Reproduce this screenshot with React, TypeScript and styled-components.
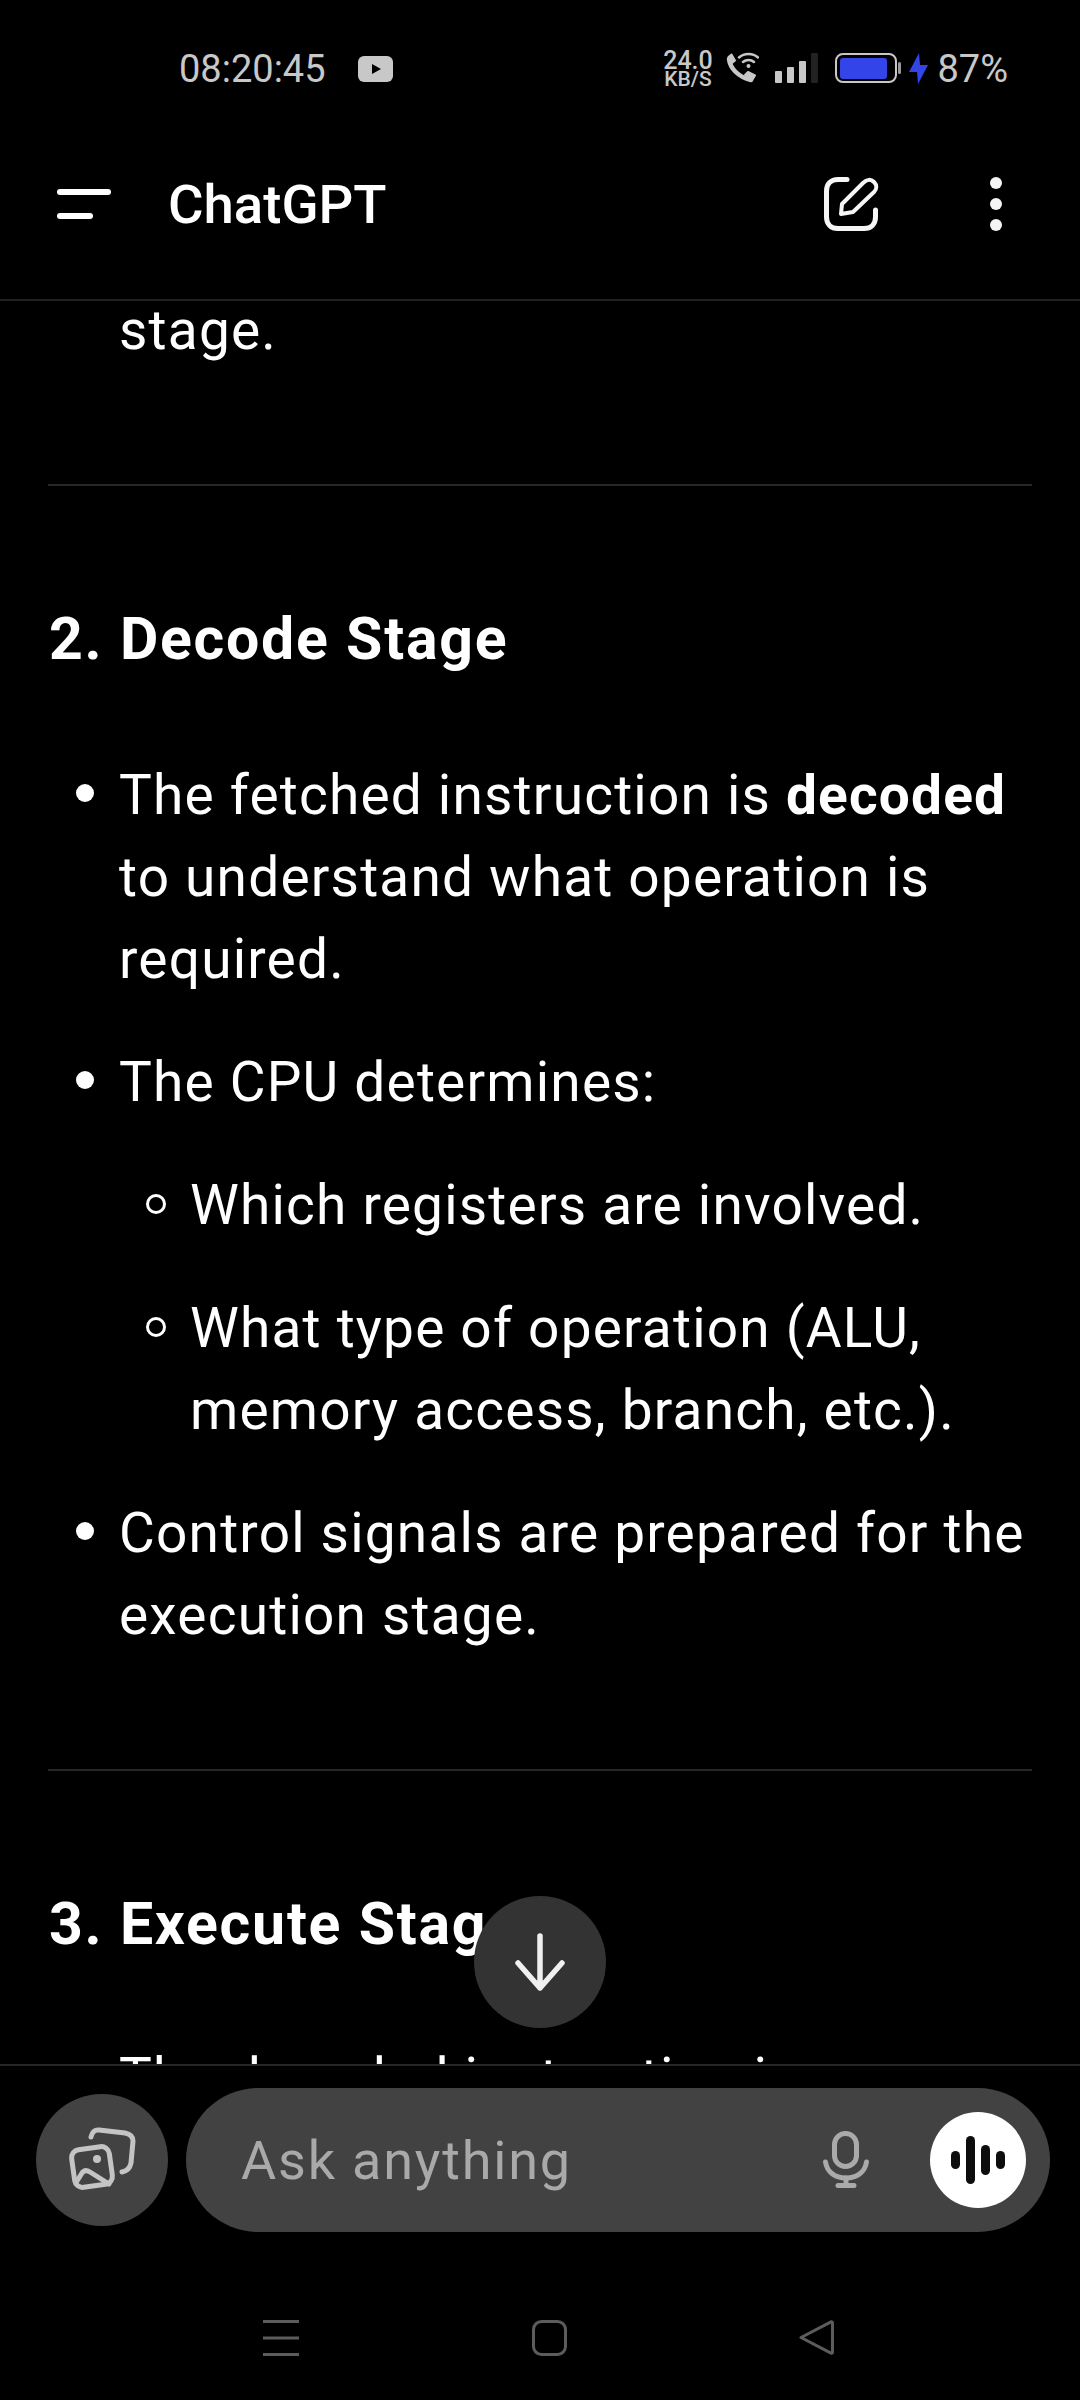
import React from 'react';
import styled, { createGlobalStyle } from 'styled-components';

const GlobalStyle = createGlobalStyle`
  html, body {
    margin: 0;
    padding: 0;
    background: #000;
  }
  * {
    box-sizing: border-box;
  }
`;

const Page = styled.div`
  position: relative;
  width: 1080px;
  height: 2400px;
  background: #000;
  color: #fff;
  font-family: Roboto, "Liberation Sans", sans-serif;
  display: flex;
  flex-direction: column;
  overflow: hidden;
`;

const StatusBar = styled.div`
  height: 135px;
  flex: none;
  display: flex;
  align-items: flex-start;
  padding: 47px 72px 0 179px;
  color: #c8c8c8;
`;

const Clock = styled.div`
  font-size: 38px;
  line-height: 44px;
  width: 146px;
`;

const StatusRight = styled.div`
  margin-left: auto;
  display: flex;
  align-items: flex-start;
  height: 44px;
`;

const Slot = styled.div<{ $left?: number; $top?: number }>`
  margin-left: ${(p) => p.$left ?? 0}px;
  margin-top: ${(p) => p.$top ?? 0}px;
  display: flex;
  flex: none;
`;

const NetSpeed = styled.div`
  width: 49px;
  margin-top: 4px;
  display: flex;
  flex-direction: column;
  align-items: center;
  font-weight: 500;
  color: #c8c8c8;
  span:first-child {
    font-size: 25px;
    line-height: 20px;
  }
  span:last-child {
    font-size: 21px;
    line-height: 15px;
    margin-top: 1px;
  }
`;

const Percent = styled.div`
  margin-left: 9px;
  font-size: 38px;
  line-height: 44px;
`;

const Header = styled.header`
  height: 166px;
  flex: none;
  display: flex;
  align-items: center;
  padding: 0 0 27px 57px;
  border-bottom: 2px solid #1f1f1f;
`;

const MenuLines = styled.div`
  width: 54px;
  display: flex;
  flex-direction: column;
  gap: 18px;
`;

const MenuLine = styled.div<{ $width: number }>`
  width: ${(p) => p.$width}px;
  height: 6px;
  border-radius: 3px;
  background: #fff;
`;

const Title = styled.h1`
  margin: 0 0 0 57px;
  font-size: 54.5px;
  line-height: 60px;
  font-weight: 500;
  color: #fff;
`;

const HeaderActions = styled.div`
  margin-left: auto;
  display: flex;
  align-items: center;
  padding-right: 78px;
`;

const Dots = styled.div`
  margin-left: 111px;
  display: flex;
  flex-direction: column;
  gap: 9px;
  span {
    width: 12px;
    height: 12px;
    border-radius: 50%;
    background: #f4f4f4;
  }
`;

const Content = styled.main`
  flex: 1;
  min-height: 0;
  overflow: hidden;
`;

const Scroller = styled.div`
  margin-top: -12px;
  padding: 0 48px;
  font-size: 55px;
  line-height: 82px;
  letter-spacing: 1.2px;
`;

const Rule = styled.hr<{ $top: number }>`
  margin: ${(p) => p.$top}px 0 0;
  border: 0;
  height: 2px;
  background: #262626;
`;

const SectionTitle = styled.h2<{ $after: number }>`
  margin: 118px 0 ${(p) => p.$after}px 1px;
  font-size: 59px;
  line-height: 70px;
  font-weight: 700;
  letter-spacing: 1.75px;
`;

const List = styled.ul<{ $nested?: boolean }>`
  list-style: none;
  margin: ${(p) => (p.$nested ? '41px 0 0' : '0')};
  padding: 0;
  display: flex;
  flex-direction: column;
  gap: 41px;
`;

const Item = styled.li`
  display: block;
`;

const Row = styled.div`
  display: flex;
`;

const Marker = styled.span<{ $hollow?: boolean }>`
  flex: none;
  width: ${(p) => (p.$hollow ? 20 : 18)}px;
  height: ${(p) => (p.$hollow ? 20 : 18)}px;
  margin: ${(p) => (p.$hollow ? '30px 24px 0 98px' : '30px 25px 0 28px')};
  border-radius: 50%;
  background: ${(p) => (p.$hollow ? 'transparent' : '#fff')};
  border: ${(p) => (p.$hollow ? '3px solid #fff' : '0')};
`;

const ContinuedText = styled.div`
  padding-left: 71px;
`;

const Text = styled.div`
  min-width: 0;
`;

const ScrollDown = styled.div`
  position: absolute;
  left: 474px;
  top: 1896px;
  width: 132px;
  height: 132px;
  border-radius: 50%;
  background: #333;
  display: flex;
  align-items: center;
  justify-content: center;
`;

const Composer = styled.div`
  flex: none;
  height: 204px;
  border-top: 2px solid #262626;
  background: #000;
  display: flex;
  align-items: flex-start;
  padding: 22px 30px 0 36px;
`;

const RoundButton = styled.div`
  flex: none;
  width: 132px;
  height: 132px;
  margin-top: 6px;
  border-radius: 50%;
  background: #424242;
  display: flex;
  align-items: center;
  justify-content: center;
`;

const Input = styled.div`
  flex: 1;
  height: 144px;
  margin-left: 18px;
  border-radius: 72px;
  background: #424242;
  display: flex;
  align-items: center;
  padding: 0 24px 0 55px;
`;

const Placeholder = styled.div`
  font-size: 54px;
  letter-spacing: 1.8px;
  color: #a9a9a9;
`;

const MicSlot = styled.div`
  margin-left: auto;
  margin-right: 61px;
  display: flex;
`;

const VoiceButton = styled.div`
  flex: none;
  width: 96px;
  height: 96px;
  border-radius: 50%;
  background: #fff;
  display: flex;
  align-items: center;
  justify-content: center;
`;

const NavBar = styled.nav`
  flex: none;
  height: 132px;
  display: flex;
  align-items: flex-start;
  padding: 52px 0 0 263px;
`;

const NavSlot = styled.div<{ $left?: number }>`
  margin-left: ${(p) => p.$left ?? 0}px;
  display: flex;
`;

const YoutubeIcon = () => (
  <svg width="35" height="26" viewBox="0 0 35 26">
    <rect width="35" height="26" rx="6" fill="#c8c8c8" />
    <path d="M14 8v10l9-5z" fill="#000" />
  </svg>
);

const CallWifiIcon = () => (
  <svg width="34" height="32" viewBox="0 0 34 32" fill="none">
    <path d="M4 7c1 9 9 18 22 21" stroke="#c8c8c8" strokeWidth="4.5" strokeLinecap="round" />
    <path d="M3.5 5l3-2.5 3.5 6-3 2.5zM20 23l3-3 7 3.5-2.5 4z" fill="#c8c8c8" stroke="#c8c8c8" strokeWidth="2" strokeLinejoin="round" />
    <path d="M14 5.5C19 .7 28 .7 33 5.5M18 10c3-2.700 8-2.700 11 0" stroke="#c8c8c8" strokeWidth="2.500" strokeLinecap="round" />
    <circle cx="23.500" cy="14" r="2" fill="#c8c8c8" />
  </svg>
);

const SignalIcon = () => (
  <svg width="43" height="30" viewBox="0 0 43 30">
    <rect x="0" y="18" width="7" height="12" rx="1" fill="#c8c8c8" />
    <rect x="12" y="14" width="7" height="16" rx="1" fill="#c8c8c8" />
    <rect x="24" y="8" width="7" height="22" rx="1" fill="#c8c8c8" />
    <rect x="36" y="0" width="7" height="30" rx="1" fill="#222" />
  </svg>
);

const BatteryIcon = () => (
  <svg width="66" height="30" viewBox="0 0 66 30">
    <rect x="1" y="1" width="60" height="28" rx="7" fill="none" stroke="#c8c8c8" strokeWidth="2" />
    <rect x="5" y="5" width="47" height="21" rx="3" fill="#3344e8" />
    <rect x="63" y="9" width="3" height="12" rx="1.500" fill="#9a9a9a" />
  </svg>
);

const BoltIcon = () => (
  <svg width="19" height="31" viewBox="0 0 19 31">
    <path d="M10 0L0 19h8l1 12 10-19h-8z" fill="#3344e8" />
  </svg>
);

const EditIcon = () => (
  <svg width="55" height="54" viewBox="0 0 55 54" fill="none" stroke="#f6f6f6" strokeLinecap="round" strokeLinejoin="round">
    <path d="M23 2.500H14C7 2.500 2.500 7 2.500 14V40C2.500 47 7 51.500 14 51.500H40C47 51.500 51.500 47 51.500 40V33" strokeWidth="5" />
    <path d="M17 37L18 27L39 6C43 2 47 2 50 5C53 8 53 12 50 15L29 35Z" strokeWidth="4" />
  </svg>
);

const ArrowDownIcon = () => (
  <svg width="52" height="60" viewBox="0 0 52 60" fill="none" stroke="#f0f0f0" strokeWidth="5.500" strokeLinecap="round" strokeLinejoin="round">
    <path d="M26 4V56M4 31L26 56L48 31" />
  </svg>
);

const GalleryIcon = () => (
  <svg width="70" height="66" viewBox="0 0 70 66" fill="none" stroke="#c4c4c4" strokeWidth="5" strokeLinecap="round" strokeLinejoin="round">
    <rect x="6" y="21" width="38" height="38" rx="8" transform="rotate(-8 25 40)" />
    <circle cx="30" cy="32" r="4" fill="#c4c4c4" stroke="none" />
    <path d="M10 54L15 46C17 43 20 43 23 45L42 57" />
    <path d="M24 10C25 5 28 2.500 32 3L58 6C63 7 66 10 66 14L64 36C63 41 60 44 55 45" />
  </svg>
);

const MicIcon = () => (
  <svg width="46" height="58" viewBox="0 0 46 58" fill="none" stroke="#aaa" strokeWidth="5" strokeLinecap="round">
    <rect x="11.500" y="2.500" width="22" height="33" rx="11" />
    <path d="M2.500 31C4 41 12 47 23 47C34 47 42 41 43.500 31" />
    <path d="M23 47V54M15 54.500H31" />
  </svg>
);

const VoiceIcon = () => (
  <svg width="54" height="48" viewBox="0 0 54 48" fill="#0d0d0d">
    <rect x="0" y="15" width="9" height="18" rx="4.500" />
    <rect x="15" y="0" width="9" height="48" rx="4.500" />
    <rect x="30" y="9" width="9" height="30" rx="4.500" />
    <rect x="45" y="15" width="9" height="18" rx="4.500" />
  </svg>
);

const NavMenuIcon = () => (
  <svg width="36" height="36" viewBox="0 0 36 36" stroke="#5c5c5c" strokeWidth="3">
    <path d="M0 1.500H36M0 18H36M0 34.500H36" />
  </svg>
);

const NavHomeIcon = () => (
  <svg width="35" height="36" viewBox="0 0 35 36" fill="none" stroke="#5c5c5c" strokeWidth="3">
    <rect x="1.500" y="1.500" width="32" height="33" rx="8" />
  </svg>
);

const NavBackIcon = () => (
  <svg width="35" height="35" viewBox="0 0 35 35" fill="none" stroke="#5c5c5c" strokeWidth="3" strokeLinejoin="round">
    <path d="M2 17.500L32 1.800C33 1.500 33.500 2 33.500 3V32C33.500 33 33 33.500 32 33.200Z" />
  </svg>
);

const App: React.FC = () => {
  return (
    <Page>
      <GlobalStyle />
      <StatusBar>
        <Clock>08:20:45</Clock>
        <Slot $left={33} $top={9}>
          <YoutubeIcon />
        </Slot>
        <StatusRight>
          <NetSpeed>
            <span>24.0</span>
            <span>KB/S</span>
          </NetSpeed>
          <Slot $left={13} $top={5}>
            <CallWifiIcon />
          </Slot>
          <Slot $left={16} $top={6}>
            <SignalIcon />
          </Slot>
          <Slot $left={17} $top={6}>
            <BatteryIcon />
          </Slot>
          <Slot $left={8} $top={6}>
            <BoltIcon />
          </Slot>
          <Percent>87%</Percent>
        </StatusRight>
      </StatusBar>

      <Header>
        <MenuLines>
          <MenuLine $width={54} />
          <MenuLine $width={36} />
        </MenuLines>
        <Title>ChatGPT</Title>
        <HeaderActions>
          <EditIcon />
          <Dots>
            <span />
            <span />
            <span />
          </Dots>
        </HeaderActions>
      </Header>

      <Content>
        <Scroller>
          <ContinuedText>stage.</ContinuedText>
          <Rule $top={113} />

          <SectionTitle $after={80}>2. Decode Stage</SectionTitle>
          <List>
            <Item>
              <Row>
                <Marker />
                <Text>
                  The fetched instruction is <b>decoded</b> to understand what operation is required.
                </Text>
              </Row>
            </Item>
            <Item>
              <Row>
                <Marker />
                <Text>The CPU determines:</Text>
              </Row>
              <List $nested>
                <Item>
                  <Row>
                    <Marker $hollow />
                    <Text>Which registers are involved.</Text>
                  </Row>
                </Item>
                <Item>
                  <Row>
                    <Marker $hollow />
                    <Text>What type of operation (ALU, memory access, branch, etc.).</Text>
                  </Row>
                </Item>
              </List>
            </Item>
            <Item>
              <Row>
                <Marker />
                <Text>Control signals are prepared for the execution stage.</Text>
              </Row>
            </Item>
          </List>
          <Rule $top={113} />

          <SectionTitle $after={78}>3. Execute Stage</SectionTitle>
          <List>
            <Item>
              <Row>
                <Marker />
                <Text>The decoded instruction is</Text>
              </Row>
            </Item>
          </List>
        </Scroller>
      </Content>

      <ScrollDown>
        <ArrowDownIcon />
      </ScrollDown>

      <Composer>
        <RoundButton>
          <GalleryIcon />
        </RoundButton>
        <Input>
          <Placeholder>Ask anything</Placeholder>
          <MicSlot>
            <MicIcon />
          </MicSlot>
          <VoiceButton>
            <VoiceIcon />
          </VoiceButton>
        </Input>
      </Composer>

      <NavBar>
        <NavMenuIcon />
        <NavSlot $left={233}>
          <NavHomeIcon />
        </NavSlot>
        <NavSlot $left={232}>
          <NavBackIcon />
        </NavSlot>
      </NavBar>
    </Page>
  );
};

export default App;
